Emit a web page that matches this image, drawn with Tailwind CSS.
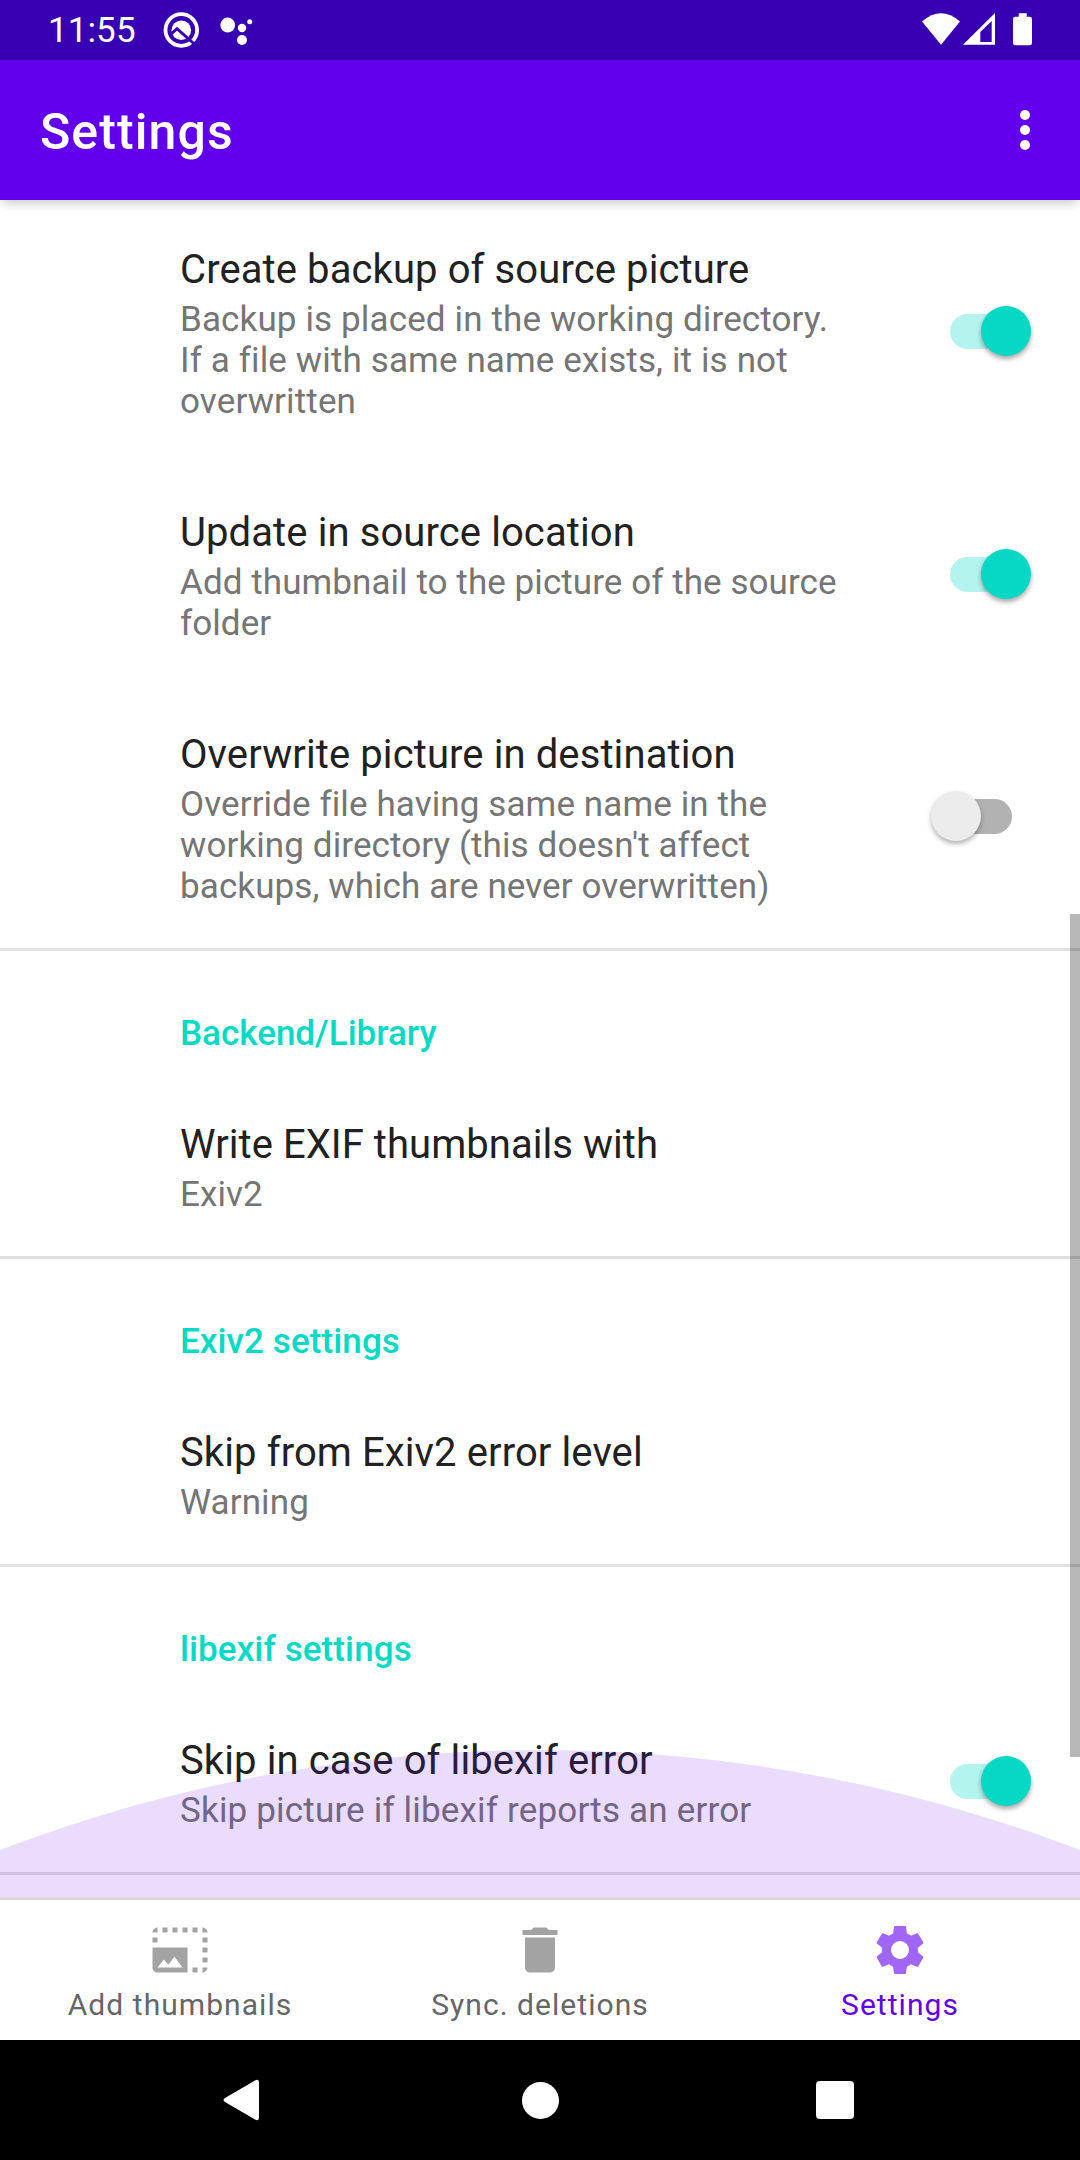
<!DOCTYPE html>
<html lang="en">
<head>
<meta charset="utf-8">
<title>Settings</title>
<script src="https://cdn.jsdelivr.net/npm/@tailwindcss/browser@4"></script>
</head>
<body class="font-['Roboto',sans-serif] bg-white">
<div class="relative flex h-[2160px] w-[1080px] flex-col overflow-hidden bg-white">

  <!-- Status bar -->
  <div class="flex h-[60px] shrink-0 items-center bg-[#3700b3] pl-[48px] text-white">
    <span class="w-[114px] pt-[2px] text-[35px] leading-[58px] tracking-[0.1px]">11:55</span>
    <svg class="ml-px h-[38px] w-[38px]" viewBox="163 11 38 38" fill="none">
      <circle cx="181.300" cy="30" r="15.800" stroke="#fff" stroke-width="3.800"/>
      <circle cx="181.300" cy="30.300" r="9.800" fill="#fff"/>
      <path d="M170.500 34.500 177 28.700 196 45.500" stroke="#3700b3" stroke-width="3"/>
    </svg>
    <svg class="ml-[17px] h-[36px] w-[36px]" viewBox="218 12 36 36" fill="#fff">
      <circle cx="227.700" cy="25" r="7.400"/><circle cx="242" cy="28" r="4.200"/><circle cx="249.700" cy="21.700" r="2.500"/><circle cx="242" cy="40" r="5"/>
    </svg>
    <svg class="ml-auto h-[60px] w-[160px]" viewBox="920 0 160 60" fill="#fff">
      <path d="M922 21.500Q941 5 960 21.500L941 44.700Z"/>
      <path fill-rule="evenodd" d="M963 44.700 995 13V44.700ZM980.300 32V42H991.700V21Z"/>
      <path d="M1013 19q0-2.300 2.300-2.300h3.400v-3.400h8v3.400h3q2.300 0 2.300 2.300v24q0 2.300-2.300 2.300h-14.400q-2.300 0-2.300-2.300Z"/>
    </svg>
  </div>

  <!-- App bar -->
  <header class="relative z-10 flex h-[140px] shrink-0 items-center justify-between bg-[#6200ee] pl-[40px] pr-[50px] text-white shadow-[0_6px_10px_-3px_rgba(0,0,0,0.22)]">
    <h1 class="pt-[4px] text-[50px] font-medium leading-[60px] tracking-[1.1px]">Settings</h1>
    <svg class="h-[40px] w-[10px]" viewBox="0 0 10 40" fill="#fff"><circle cx="5" cy="5" r="5"/><circle cx="5" cy="20" r="5"/><circle cx="5" cy="35" r="5"/></svg>
  </header>

  <!-- Preference list -->
  <main class="relative h-[1697px] shrink-0 overflow-hidden text-[35px] leading-[41px] tracking-[0.1px] text-[#757575]">
    <section class="flex items-center justify-between pl-[180px] pr-[40px]">
      <div class="pb-[41px] pt-[46px]">
        <h2 class="text-[40px] leading-[47px] text-[#212121]">Create backup of source picture</h2>
        <p class="mt-[6px] tracking-[0.13px]">Backup is placed in the working directory.<br>If a file with same name exists, it is not<br>overwritten</p>
      </div>
      <div class="mb-px flex h-[50px] w-[90px] items-center justify-end">
        <div class="h-[35px] w-[49px] rounded-l-full bg-[#b4f4ee]"></div>
        <div class="-ml-[18px] mr-[9px] size-[50px] shrink-0 rounded-full bg-[#05d8c4] shadow-[0_3px_5px_rgba(0,0,0,0.35)]"></div>
      </div>
    </section>
    <section class="flex items-center justify-between pl-[180px] pr-[40px]">
      <div class="pb-[41px] pt-[46px]">
        <h2 class="text-[40px] leading-[47px] text-[#212121]">Update in source location</h2>
        <p class="mt-[6px] tracking-[0.07px]">Add thumbnail to the picture of the source<br>folder</p>
      </div>
      <div class="flex h-[50px] w-[90px] items-center justify-end">
        <div class="h-[35px] w-[49px] rounded-l-full bg-[#b4f4ee]"></div>
        <div class="-ml-[18px] mr-[9px] size-[50px] shrink-0 rounded-full bg-[#05d8c4] shadow-[0_3px_5px_rgba(0,0,0,0.35)]"></div>
      </div>
    </section>
    <section class="flex items-center justify-between pl-[180px] pr-[68px]">
      <div class="pb-[41px] pt-[46px]">
        <h2 class="text-[40px] leading-[47px] text-[#212121]">Overwrite picture in destination</h2>
        <p class="mt-[6px]">Override file having same name in the<br>working directory (this doesn't affect<br>backups, which are never overwritten)</p>
      </div>
      <div class="mb-px flex h-[50px] items-center">
        <div class="z-[1] size-[50px] rounded-full bg-[#ececec] shadow-[0_3px_5px_rgba(0,0,0,0.3)]"></div>
        <div class="-ml-[18px] h-[35px] w-[49px] rounded-r-full bg-[#b2b2b2]"></div>
      </div>
    </section>

    <section class="h-[308px] border-t-3 border-black/12 pl-[180px]">
      <h3 class="pt-[62px] font-medium tracking-normal text-[#03dac5]">Backend/Library</h3>
      <h2 class="mt-[67px] text-[40px] leading-[47px] tracking-[0.05px] text-[#212121]">Write EXIF thumbnails with</h2>
      <p class="mt-[6px]">Exiv2</p>
    </section>
    <section class="h-[308px] border-t-3 border-black/12 pl-[180px]">
      <h3 class="pt-[62px] font-medium text-[#03dac5]">Exiv2 settings</h3>
      <h2 class="mt-[67px] text-[40px] leading-[47px] text-[#212121]">Skip from Exiv2 error level</h2>
      <p class="mt-[6px]">Warning</p>
    </section>
    <section class="h-[308px] border-t-3 border-black/12 pl-[180px]">
      <h3 class="pt-[62px] font-medium text-[#03dac5]">libexif settings</h3>
      <div class="flex items-center justify-between pr-[40px]">
        <div class="pb-[41px] pt-[67px]">
          <h2 class="text-[40px] leading-[47px] text-[#212121]">Skip in case of libexif error</h2>
          <p class="mt-[6px] tracking-[0.18px]">Skip picture if libexif reports an error</p>
        </div>
        <div class="mt-[20px] flex h-[50px] w-[90px] items-center justify-end">
          <div class="h-[35px] w-[49px] rounded-l-full bg-[#b4f4ee]"></div>
          <div class="-ml-[18px] mr-[9px] size-[50px] shrink-0 rounded-full bg-[#05d8c4] shadow-[0_3px_5px_rgba(0,0,0,0.35)]"></div>
        </div>
      </div>
    </section>
    <div class="h-[25px] border-t-3 border-black/12"></div>

    <!-- Touch ripple and scrollbar float over the list -->
    <svg class="absolute bottom-0 left-0 h-[147px] w-[1080px]" viewBox="0 0 1080 147"><circle cx="540" cy="1508" r="1508" fill="#6200ee" fill-opacity=".137"/></svg>
    <div class="absolute right-0 top-[714px] h-[843px] w-[10px] bg-black/28"></div>
  </main>

  <!-- Bottom navigation -->
  <nav class="grid h-[143px] shrink-0 grid-cols-[360px_360px_360px] border-t-3 border-[#dadada] bg-white text-[30px] leading-[36px] tracking-[1.05px] text-[#666]">
    <div class="flex flex-col items-center pt-[20px]">
      <svg class="size-[60px]" viewBox="0 0 24 24" fill="#a3a3a3"><path d="M21 15h2v2h-2v-2zm0-4h2v2h-2v-2zm2 8h-2v2c1 0 2-1 2-2zM13 3h2v2h-2V3zm8 4h2v2h-2V7zm0-4v2h2c0-1-1-2-2-2zM1 7h2v2H1V7zm16-4h2v2h-2V3zm0 16h2v2h-2v-2zM3 3C2 3 1 4 1 5h2V3zm6 0h2v2H9V3zM5 3h2v2H5V3zm-4 8v8c0 1.100.9 2 2 2h12V11H1zm2 8 2.500-3.210 1.790 2.150 2.500-3.220L13 19H3z"/></svg>
      <span class="mt-[7px]">Add thumbnails</span>
    </div>
    <div class="flex flex-col items-center pt-[20px]">
      <svg class="size-[60px]" viewBox="0 0 24 24" fill="#a3a3a3"><path d="M6 19c0 1.100.9 2 2 2h8c1.100 0 2-.9 2-2V7H6v12zM19 4h-3.500l-1-1h-5l-1 1H5v2h14V4z"/></svg>
      <span class="mt-[7px]">Sync. deletions</span>
    </div>
    <div class="flex flex-col items-center pt-[20px] text-[#6200ee]">
      <svg class="size-[60px]" viewBox="0 0 24 24" fill="#a166f5"><path d="M19.140 12.940c.04-.3.060-.610.060-.940 0-.320-.020-.640-.070-.940l2.030-1.580c.180-.140.230-.410.120-.610l-1.920-3.320c-.120-.220-.370-.290-.590-.220l-2.390.960c-.5-.380-1.030-.7-1.620-.940l-.360-2.540c-.040-.240-.240-.410-.480-.410h-3.840c-.240 0-.430.170-.470.410l-.360 2.540c-.590.240-1.130.570-1.620.940l-2.390-.960c-.220-.080-.470 0-.590.220L2.740 8.870c-.120.210-.080.470.120.610l2.030 1.580c-.050.3-.090.630-.090.940s.020.640.070.940l-2.030 1.580c-.180.140-.230.410-.120.610l1.920 3.320c.120.220.370.290.590.220l2.390-.960c.5.380 1.030.7 1.620.940l.360 2.540c.050.240.240.410.480.410h3.840c.240 0 .440-.170.470-.410l.360-2.540c.590-.240 1.130-.560 1.620-.940l2.390.960c.220.080.470 0 .590-.220l1.920-3.320c.120-.220.070-.470-.120-.610l-2.010-1.580zM12 15c-1.660 0-3-1.340-3-3s1.340-3 3-3 3 1.340 3 3-1.340 3-3 3z" transform="translate(0 0)"/><circle cx="12" cy="12" r="3.600" fill="#fff"/></svg>
      <span class="mt-[7px]">Settings</span>
    </div>
  </nav>

  <!-- System navigation -->
  <div class="flex h-[120px] shrink-0 items-center justify-between bg-black pl-[222px] pr-[226px]">
    <svg class="h-[42px] w-[42px]" viewBox="0 0 42 42" fill="#fff"><path d="M3 19 33 1.500q4-2 4 2v35q0 4-4 2L3 23q-3-2 0-4Z"/></svg>
    <div class="size-[37px] rounded-full bg-white"></div>
    <div class="size-[38px] rounded-[4px] bg-white"></div>
  </div>
</div>
</body>
</html>
